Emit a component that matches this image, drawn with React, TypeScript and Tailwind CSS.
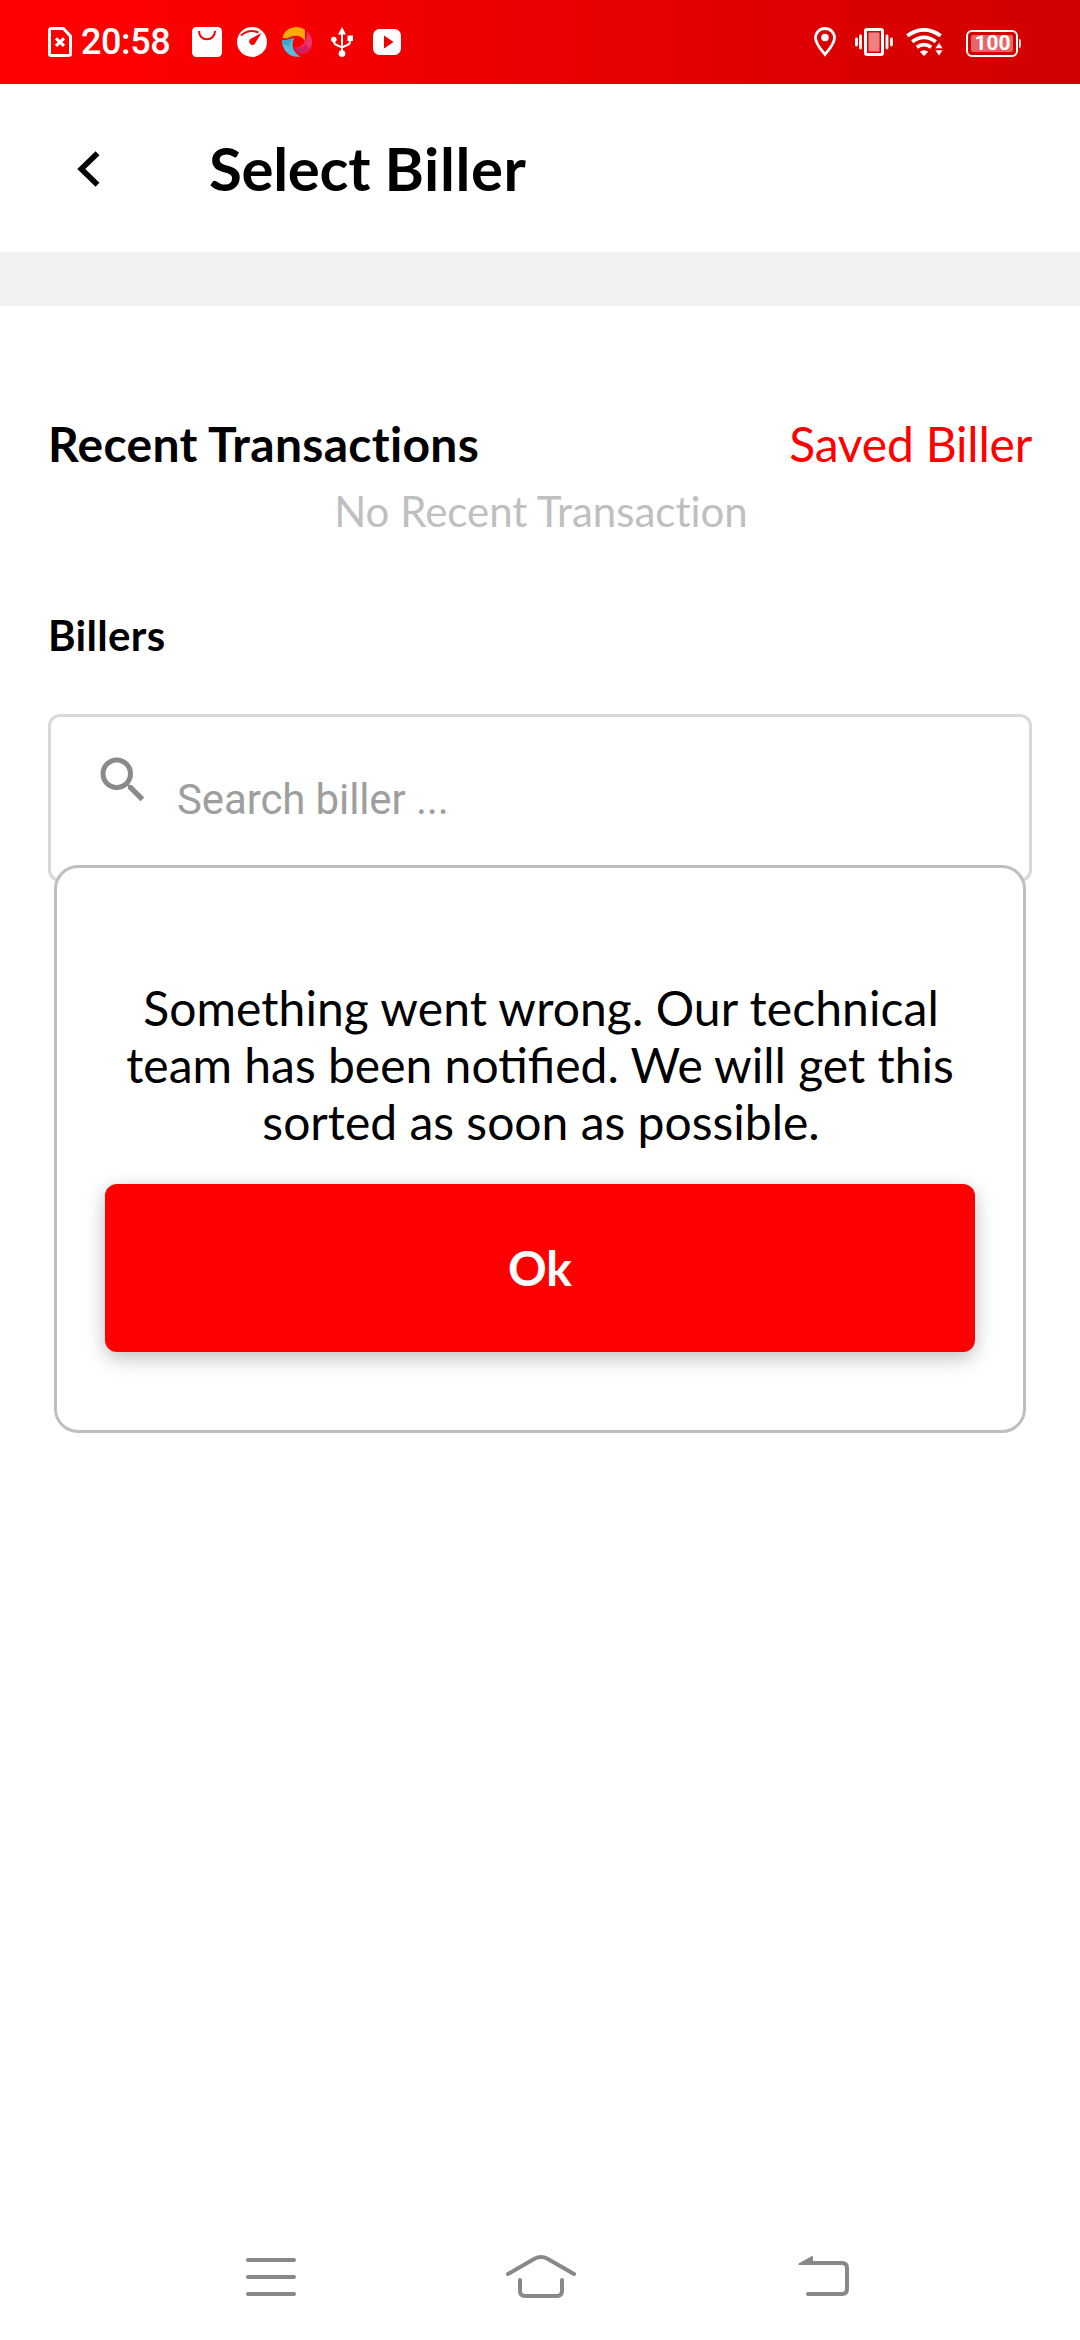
import React from "react";
import { MdSearch } from "react-icons/md";

function SimIcon() {
  return (
    <svg className="h-[30px] w-6" viewBox="0 0 24 30" fill="none" stroke="#fff">
      <path d="M3 1.5H15.4L22.5 9.2V27a1.5 1.5 0 0 1-1.5 1.5H3A1.5 1.5 0 0 1 1.5 27V3A1.5 1.5 0 0 1 3 1.5Z" strokeWidth="3" />
      <path d="M8 11.3l8 7.6M16 11.3l-8 7.6" strokeWidth="3.2" />
    </svg>
  );
}

function BagIcon() {
  return (
    <svg className="size-[30px]" viewBox="0 0 30 30" fill="none">
      <rect width="30" height="30" rx="4.5" fill="#fff" />
      <path d="M7 4c0 5 3.500 8.300 8 8.300s8-3.300 8-8.300" stroke="#f80000" strokeWidth="2" />
    </svg>
  );
}

function GaugeIcon() {
  return (
    <svg className="size-[30px]" viewBox="0 0 30 30" fill="none">
      <circle cx="15" cy="15" r="15" fill="#fff" />
      <path d="M4 8.500Q12 1.500 21.500 5.500" stroke="#f60000" strokeWidth="2" />
      <path d="M24.500 6 18.600 15.500A3.300 3.300 0 1 1 13.800 11.700Z" fill="#f60000" />
    </svg>
  );
}

function SwirlIcon() {
  return (
    <svg className="size-[30px]" viewBox="0 0 30 30">
      <path d="M0.5 10.500C2 4 8 0 14.500 0 18 0 21 1.300 23 3V14C20 9 14 7.500 8.500 10 5 11.500 2.500 12 0.5 10.500Z" fill="#ffa90a" />
      <path d="M25 4c5 5 6.500 12 3.500 18-3 4.500-8 6-11.500 4-2.500-1-4-3-4.500-5.500C19 21.500 25.500 15 25 4Z" fill="#f23168" />
      <path d="M12.500 20.500Q19 22 23 17L28 22.500c-3 4.500-8 5.500-11.500 3.500-2.500-1-3.500-3-4-5.500Z" fill="#d31f5c" />
      <path d="M0 13c4 1 8-2 12-1.500-3.500 7-.5 14 6.500 18C9 31.500 0 24.500 0 13Z" fill="#56bddb" />
      <path d="M0 13c4 1 8-2 12-1.500-3 1.500-5 4-4.500 8.500C5 17.500 2 17.500 0.500 19 0 17 0 15 0 13Z" fill="#3aa6cc" />
    </svg>
  );
}

function UsbIcon() {
  return (
    <svg className="h-[30px] w-[22px]" viewBox="0 0 22 30" fill="none">
      <path d="M11 5v20M3 13v1.500q0 2.500 2.500 3.500l5.500 2.300 5.500-2.300Q19 17 19 14.500V12" stroke="#fff" strokeWidth="2" />
      <path d="M11 0 15 7.500H7Z" fill="#fff" />
      <circle cx="2.800" cy="12.500" r="2.800" fill="#fff" />
      <rect x="16.500" y="8.500" width="5.500" height="5.500" fill="#fff" />
      <circle cx="11" cy="26.600" r="3.400" fill="#fff" />
    </svg>
  );
}

function PlayIcon() {
  return (
    <svg className="h-[26px] w-7" viewBox="0 0 28 26">
      <rect width="28" height="26" rx="6.500" fill="#fff" />
      <path d="M11 6.500 20.500 13 11 19.500Z" fill="#ee0000" />
    </svg>
  );
}

function PinIcon() {
  return (
    <svg className="h-[30px] w-[22px]" viewBox="0 0 22 30" fill="none">
      <path d="M11 1.500C5.600 1.500 1.500 5.500 1.500 10.800 1.500 17 7 22.500 11 27.500c4-5 9.500-10.500 9.500-16.700C20.500 5.500 16.400 1.500 11 1.500Z" stroke="#fff" strokeWidth="2.800" />
      <circle cx="11" cy="10.500" r="3.800" fill="#fff" />
    </svg>
  );
}

function VibrateIcon() {
  return (
    <svg className="h-7 w-[38px]" viewBox="0 0 38 28" fill="none">
      <rect x="10.500" y="1.500" width="17" height="25" rx="1.500" stroke="#fff" strokeWidth="3" />
      <rect x="13.500" y="4.500" width="11" height="19" fill="#fff" fillOpacity=".5" />
      <path d="M1.500 11v6M5.500 8v12M32 8v12M36.500 11v6" stroke="#fff" strokeWidth="2.800" strokeLinecap="round" />
    </svg>
  );
}

function WifiIcon() {
  return (
    <svg className="h-7 w-[37px]" viewBox="0 0 37 28" fill="none">
      <path d="M1.300 7.800Q18 -4.200 34.700 7.800M6.200 13.800Q18 5 29.800 13.800M10.800 19.200Q18 14 25.200 19.200" stroke="#fff" strokeWidth="3.800" />
      <path d="M18 28 13.800 23.800Q18 20.500 22.200 23.800Z" fill="#fff" />
      <path d="M29 20.500 33 14.500 37 20.500ZM29 22 33 28 37 22Z" fill="#fff" stroke="#da0000" strokeWidth=".6" />
    </svg>
  );
}

function Battery() {
  return (
    <div className="flex items-center gap-px">
      <div className="flex h-[27px] w-[52px] rounded-[6px] border-2 border-white p-[3px]">
        <div className="flex flex-1 items-center justify-center rounded-[2px] bg-white/40 pl-px font-[Roboto] text-[21px] leading-none font-bold text-white">
          100
        </div>
      </div>
      <div className="h-[9px] w-[2px] rounded-r-sm bg-white/80" />
    </div>
  );
}

function StatusBar() {
  return (
    <div className="flex h-[84px] items-center justify-between bg-linear-to-r from-[#ff0000] from-10% to-[#d00000] pr-[59px] pl-12">
      <div className="flex items-center">
        <SimIcon />
        <span className="ml-[9px] w-[111px] font-[Roboto] text-[36px] leading-[42px] font-medium tracking-[-0.4px] text-white">20:58</span>
        <div className="flex items-center gap-[15px]">
          <BagIcon />
          <GaugeIcon />
          <SwirlIcon />
        </div>
        <div className="ml-[19px] flex items-center gap-5">
          <UsbIcon />
          <PlayIcon />
        </div>
      </div>
      <div className="flex items-center">
        <PinIcon />
        <div className="ml-[19px] flex items-center gap-[13px]">
          <VibrateIcon />
          <WifiIcon />
        </div>
        <div className="mt-[3px] ml-[23px]">
          <Battery />
        </div>
      </div>
    </div>
  );
}

function Header() {
  return (
    <header className="flex h-[168px] items-center pl-[77px]">
      <svg className="mt-[2px] h-9 w-[23px]" viewBox="0 0 23 36" fill="none" stroke="#000" strokeWidth="5.600">
        <path d="M20.500 2.200 4.300 18l16.200 15.800" />
      </svg>
      <h1 className="ml-[109px] text-[60px] leading-[72px] font-bold tracking-[-0.3px]">
        Select <span className="tracking-[0.6px]">Biller</span>
      </h1>
    </header>
  );
}

function NavBar() {
  return (
    <nav className="mt-auto flex h-[126px] items-start pt-[41px] pl-[246px]">
      <svg className="h-11 w-[50px]" viewBox="0 0 50 44" stroke="#888" strokeWidth="4" strokeLinecap="round">
        <path d="M2 5h46M2 22h46M2 39h46" />
      </svg>
      <svg className="ml-[210px] h-11 w-[70px]" viewBox="0 0 70 44" fill="none" stroke="#888" strokeWidth="4" strokeLinecap="round">
        <path d="M2 19 28.500 3.800Q35 .3 41.500 3.800L68 19M14 25v11q0 5 5 5h32q5 0 5-5V25" />
      </svg>
      <svg className="ml-[222px] h-11 w-[51px]" viewBox="0 0 51 44" fill="none">
        <path d="M10 39h34q5 0 5-5V13q0-5-5-5H10" stroke="#888" strokeWidth="4" strokeLinecap="round" />
        <path d="M1.500 9 14 2V9Z" fill="#888" stroke="#888" strokeWidth="2" strokeLinejoin="round" />
      </svg>
    </nav>
  );
}

function ErrorDialog() {
  return (
    <div className="absolute top-[865px] left-[54px] flex h-[568px] w-[972px] flex-col rounded-[24px] border-3 border-[#bfbfbf] bg-white px-12 pt-[111px]">
      <p className="text-center text-[48px] leading-[57px]">
        <span className="pl-[2px] tracking-[0.08px]">Something went wrong. Our technical</span>
        <br />
        team has been notified. We will get this
        <br />
        <span className="pl-[2px]">sorted as soon as possible.</span>
      </p>
      <button className="mt-[34px] h-[168px] rounded-[12px] bg-[#ff0000] text-[48px] font-bold text-white shadow-[0_6px_20px_rgba(0,0,0,0.26)]">
        Ok
      </button>
    </div>
  );
}

export default function App() {
  return (
    <div className="relative flex h-[2340px] w-[1080px] flex-col overflow-hidden bg-white font-[Lato,sans-serif] text-black">
      <StatusBar />
      <Header />
      <div className="h-[54px] bg-[#f1f1f1]" />
      <main className="flex flex-col px-12 pt-[109px]">
        <div className="flex items-center justify-between text-[48px] leading-[58px]">
          <h2 className="font-bold tracking-[0.3px]">Recent Transactions</h2>
          <a className="tracking-[-0.2px] text-[#ff0000]">Saved Biller</a>
        </div>
        <p className="mt-[13px] pl-[2px] text-center text-[42px] leading-[51px] text-[#bfbfbf] [font-variant-ligatures:none]">No Recent Transaction</p>
        <h3 className="mt-[73px] text-[42px] leading-[51px] font-bold tracking-[0.3px]">Billers</h3>
        <div className="mt-[53px] flex h-[168px] rounded-[12px] border-3 border-[#d9d9d9] pl-[42px]">
          <MdSearch className="mt-[33px] size-[60px] shrink-0 text-[#8a8a8a]" />
          <span className="mt-[58px] ml-[24px] font-[Roboto] text-[42px] leading-[50px] tracking-[-0.12px] text-[#9e9e9e]">Search biller ...</span>
        </div>
      </main>
      <NavBar />
      <ErrorDialog />
    </div>
  );
}
